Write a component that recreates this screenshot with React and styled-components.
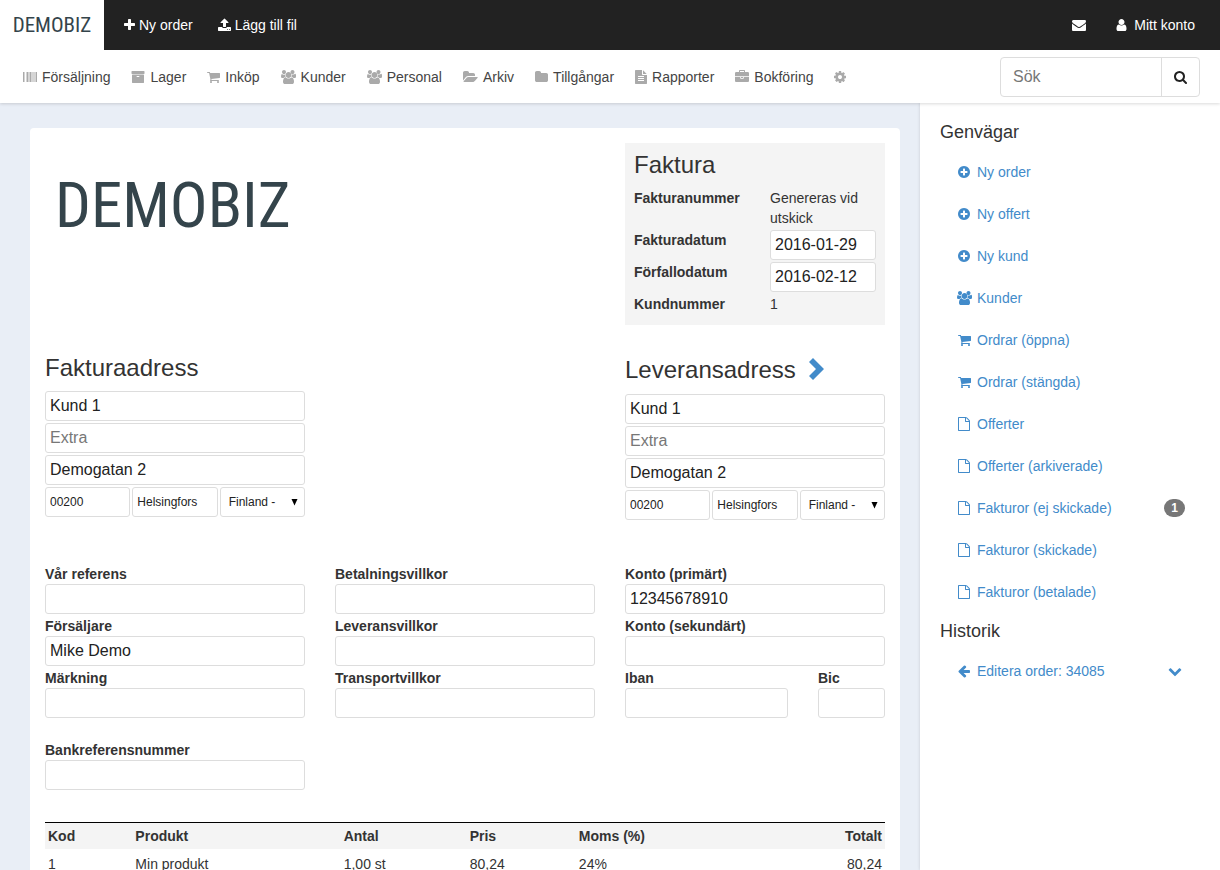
import React from 'react';
import styled, { createGlobalStyle } from 'styled-components';

const GlobalStyle = createGlobalStyle`
  * {
    box-sizing: border-box;
  }

  body {
    margin: 0;
    color: #333;
    background: #e9eef6;
    font-family: "Liberation Sans", Arial, sans-serif;
    font-size: 14px;
    line-height: 20px;
  }

  input, select, button {
    font-family: inherit;
  }

  a {
    color: inherit;
    text-decoration: none;
  }
`;

const Page = styled.div`
  display: flex;
  flex-direction: column;
  height: 100vh;
`;

const TopBar = styled.header`
  display: flex;
  align-items: center;
  flex: none;
  position: relative;
  z-index: 3;
  height: 50px;
  padding-right: 25px;
  background: #222;
  color: #fff;
`;

const Brand = styled.a`
  display: flex;
  align-items: center;
  justify-content: center;
  width: 104px;
  height: 50px;
  margin-right: 20px;
  background: #fff;
`;

const Wordmark = styled.span`
  color: #34444b;
  font-family: "Roboto Condensed", "DejaVu Sans Condensed", sans-serif;
  font-size: ${(props) => (props.$large ? 63 : 21)}px;
  line-height: ${(props) => (props.$large ? 56 : 20)}px;
`;

const TopLink = styled.a`
  display: flex;
  align-items: center;
  gap: 4px;
  margin-right: 25px;
`;

const Account = styled.div`
  display: flex;
  align-items: center;
  gap: 26px;
  margin-left: auto;

  ${TopLink} {
    margin-right: 0;
  }
`;

const NavBar = styled.nav`
  display: flex;
  align-items: center;
  justify-content: space-between;
  flex: none;
  position: relative;
  z-index: 2;
  height: 53px;
  padding: 0 20px 0 23px;
  background: #fff;
  box-shadow: 0 1px 3px rgba(0, 0, 0, 0.15);
`;

const NavList = styled.ul`
  display: flex;
  gap: 21px;
  margin: 0;
  padding: 0;
  list-style: none;
`;

const NavLink = styled.a`
  display: flex;
  align-items: center;
  gap: 5px;
  min-height: 20px;
  color: #444;

  svg {
    color: #aaa;
  }
`;

const SearchForm = styled.form`
  display: flex;
  width: 200px;
  height: 40px;
  border: 1px solid #ddd;
  border-radius: 4px;
`;

const SearchInput = styled.input`
  flex: 1;
  min-width: 0;
  padding: 0 12px;
  border: none;
  background: none;
  font-size: 16px;

  &::placeholder {
    color: #777;
  }
`;

const SearchButton = styled.button`
  display: flex;
  align-items: center;
  justify-content: center;
  width: 38px;
  padding: 0;
  border: none;
  border-left: 1px solid #ddd;
  background: none;
  color: #222;
  cursor: pointer;
`;

const Body = styled.div`
  display: flex;
  flex: 1;
  min-height: 0;
`;

const Content = styled.main`
  flex: 1;
  min-width: 0;
  padding: 25px 20px 25px 30px;
  overflow-y: auto;
  scrollbar-width: none;
`;

const Invoice = styled.div`
  padding: 15px;
  border-radius: 4px;
  background: #fff;
`;

const Columns = styled.div`
  display: grid;
  grid-template-columns: repeat(3, 1fr);
  column-gap: 30px;
  align-items: start;
  margin-top: ${(props) => props.$space || 0}px;
`;

const LogoCell = styled.div`
  display: flex;
  grid-column: span 2;
  padding: 35px 10px;
`;

const Summary = styled.section`
  padding: 9px 9px 11px;
  background: #f4f4f4;
`;

const Heading = styled.h3`
  display: flex;
  align-items: center;
  gap: 12px;
  margin: 0 0 10px;
  min-height: ${(props) => (props.$tall ? 29 : 26)}px;
  font-size: 24px;
  font-weight: normal;
  line-height: 26px;
`;

const SummaryGrid = styled.div`
  display: grid;
  grid-template-columns: 1fr 106px;
  row-gap: 2px;
`;

const Label = styled.label`
  display: block;
  font-weight: bold;
`;

const Term = styled.div`
  font-weight: bold;
`;

const Input = styled.input`
  display: block;
  width: 100%;
  min-width: 0;
  height: 30px;
  padding: 0 4px;
  border: 1px solid #ddd;
  border-radius: 3px;
  background: #fff;
  color: #222;
  font-size: ${(props) => (props.$small ? 12 : 16)}px;

  &::placeholder {
    color: #777;
  }
`;

const Address = styled.section`
  grid-column: ${(props) => props.$column};
`;

const AddressFields = styled.div`
  display: grid;
  gap: 2px;
`;

const PostalRow = styled.div`
  display: grid;
  grid-template-columns: repeat(3, 1fr);
  gap: 2px;
`;

const SelectBox = styled.div`
  position: relative;

  svg {
    position: absolute;
    top: 12px;
    right: 7px;
    pointer-events: none;
  }
`;

const Select = styled.select`
  width: 100%;
  height: 30px;
  padding: 0 8px;
  border: 1px solid #ddd;
  border-radius: 3px;
  appearance: none;
  background: #fff;
  color: #222;
  font-size: 12px;
`;

const CopyButton = styled.button`
  display: flex;
  padding: 0;
  border: none;
  background: none;
  color: #428bca;
  cursor: pointer;
`;

const FieldStack = styled.div`
  display: grid;
  gap: 2px;
`;

const BankRow = styled.div`
  display: grid;
  grid-template-columns: 17fr 7fr;
  gap: 30px;
`;

const OrderTable = styled.table`
  width: 100%;
  margin-top: 32px;
  border-collapse: collapse;
  table-layout: fixed;
  border-top: 1px solid #000;

  th {
    padding: 3px;
    background: #f4f4f4;
    text-align: left;
  }

  td {
    padding: 5px 3px;
  }

  th:last-child,
  td:last-child {
    text-align: right;
  }
`;

const Th = styled.th`
  width: ${(props) => props.$width || 'auto'};
`;

const Sidebar = styled.aside`
  flex: none;
  width: 300px;
  padding: 11px 20px;
  background: #fff;
  box-shadow: 0 0 3px rgba(0, 0, 0, 0.15);
  overflow-y: auto;
  scrollbar-width: none;
`;

const SideHeading = styled.h4`
  margin: 8px 0 9px;
  font-size: 18px;
  font-weight: normal;
  line-height: 20px;
`;

const SideList = styled.ul`
  margin: 0;
  padding: 0;
  list-style: none;
`;

const SideItem = styled.li`
  display: flex;
  align-items: center;
  justify-content: space-between;
  height: 42px;
  padding: 0 15px;
  color: #428bca;
`;

const SideLink = styled.a`
  display: flex;
  align-items: center;
  gap: 4px;
`;

const IconSlot = styled.span`
  display: flex;
  justify-content: center;
  width: 18px;
`;

const Badge = styled.span`
  padding: 3px 7px;
  border-radius: 10px;
  background: #777;
  color: #fff;
  font-size: 12px;
  font-weight: bold;
  line-height: 12px;
`;

const ExpandButton = styled.button`
  display: flex;
  padding: 0 3px;
  border: none;
  background: none;
  color: #428bca;
  cursor: pointer;
`;

// w is the advance width in pixels at a 14px icon size, x the left edge of the glyph box
const icons = {
  plus: { w: 11, x: 192, d: 'M1600 736v192q0 40-28 68t-68 28h-416v416q0 40-28 68t-68 28h-192q-40 0-68-28t-28-68v-416h-416q-40 0-68-28t-28-68v-192q0-40 28-68t68-28h416v-416q0-40 28-68t68-28h192q40 0 68 28t28 68v416h416q40 0 68 28t28 68z' },
  upload: { w: 13, x: 64, d: 'M1344 1472q0-26-19-45t-45-19-45 19-19 45 19 45 45 19 45-19 19-45zm256 0q0-26-19-45t-45-19-45 19-19 45 19 45 45 19 45-19 19-45zm128-224v320q0 40-28 68t-68 28h-1472q-40 0-68-28t-28-68v-320q0-40 28-68t68-28h427q21 56 70.5 92t110.5 36h256q61 0 110.5-36t70.5-92h427q40 0 68 28t28 68zm-325-648q-17 40-59 40h-256v448q0 26-19 45t-45 19h-256q-26 0-45-19t-19-45v-448h-256q-42 0-59-40-17-39 14-69l448-448q18-19 45-19t45 19l448 448q31 30 14 69z' },
  search: { w: 13, x: 64, d: 'M1216 832q0-185-131.5-316.5t-316.5-131.5-316.5 131.5-131.5 316.5 131.5 316.5 316.5 131.5 316.5-131.5 131.5-316.5zm512 832q0 52-38 90t-90 38q-54 0-90-38l-343-342q-179 124-399 124-143 0-273.5-55.5t-225-150-150-225-55.5-273.5 55.5-273.5 150-225 225-150 273.5-55.5 273.5 55.5 225 150 150 225 55.5 273.5q0 220-124 399l343 343q37 37 37 90z' },
  envelope: { w: 14, x: 0, d: 'M1792 710v794q0 66-47 113t-113 47h-1472q-66 0-113-47t-47-113v-794q44 49 101 87 362 246 497 345 57 42 92.5 65.5t94.5 48 110 24.5h2q51 0 110-24.5t94.5-48 92.5-65.5q170-123 498-345 57-39 100-87zm0-294q0 79-49 151t-122 123q-376 261-468 325-10 7-42.5 31t-54 38.5-52 32.5-57.5 27-50 9h-2q-23 0-50-9t-57.5-27-52-32.5-54-38.5-42.5-31q-91-64-262-182.5t-205-142.5q-62-42-117-115.5t-55-136.5q0-78 41.5-130t118.5-52h1472q65 0 112.5 47t47.5 113z' },
  user: { w: 11, x: 192, d: 'M1536 1399q0 109-62.5 187t-150.5 78h-854q-88 0-150.5-78t-62.5-187q0-85 8.5-160.5t31.5-152 58.5-131 94-89 134.5-34.5q131 128 313 128t313-128q76 0 134.5 34.5t94 89 58.5 131 31.5 152 8.5 160.5zm-256-887q0 159-112.5 271.5t-271.5 112.5-271.5-112.5-112.5-271.5 112.5-271.5 271.5-112.5 271.5 112.5 112.5 271.5z' },
  barcode: { w: 14, x: 0, d: 'M0 256h128v1280h-128zM192 256h64v1280h-64zM384 256h64v1280h-64zM512 256h192v1280h-192zM768 256h64v1280h-64zM896 256h128v1280h-128zM1088 256h64v1280h-64zM1216 256h128v1280h-128zM1408 256h64v1280h-64zM1536 256h64v1280h-64zM1664 256h128v1280h-128z' },
  archive: { w: 14, x: 0, d: 'M1088 832q0-26-19-45t-45-19h-256q-26 0-45 19t-19 45 19 45 45 19h256q26 0 45-19t19-45zm576-192v960q0 26-19 45t-45 19h-1408q-26 0-45-19t-19-45v-960q0-26 19-45t45-19h1408q26 0 45 19t19 45zm64-448v256q0 26-19 45t-45 19h-1536q-26 0-45-19t-19-45v-256q0-26 19-45t45-19h1536q26 0 45 19t19 45z' },
  cart: { w: 13, x: 64, d: 'M704 1536q0 52-38 90t-90 38-90-38-38-90 38-90 90-38 90 38 38 90zm896 0q0 52-38 90t-90 38-90-38-38-90 38-90 90-38 90 38 38 90zm128-1088v512q0 24-16.5 42.5t-40.5 21.5l-1044 122q13 60 13 70 0 16-24 64h920q26 0 45 19t19 45-19 45-45 19h-1024q-26 0-45-19t-19-45q0-11 8-31.5t16-36 21.5-40 15.5-29.5l-177-823h-204q-26 0-45-19t-19-45 19-45 45-19h256q16 0 28.5 6.5t19.5 15.5 13 24.5 8 26 5.5 29.5 4.5 26h1201q26 0 45 19t19 45z' },
  users: { w: 15, x: -64, d: 'M529 896q-162 5-265 128h-134q-82 0-138-40.5t-56-118.5q0-353 124-353 6 0 43.5 21t97.5 42.5 119 21.5q67 0 133-23-5 37-5 66 0 159 93 293zm1071 637q0 120-73 189.5t-194 69.5h-874q-121 0-194-69.5t-73-189.5q0-53 3.5-103.5t14-109 26.5-108.5 43-97.5 62-81 85.5-53.5 111.5-20q10 0 43 21.5t73 48 107 48 135 21.5 135-21.5 107-48 73-48 43-21.5q61 0 111.5 20t85.5 53.5 62 81 43 97.5 26.5 108.5 14 109 3.5 103.5zm-1024-1277q0 106-75 181t-181 75-181-75-75-181 75-181 181-75 181 75 75 181zm704 384q0 159-112.5 271.5t-271.5 112.5-271.5-112.5-112.5-271.5 112.5-271.5 271.5-112.5 271.5 112.5 112.5 271.5zm576 225q0 78-56 118.5t-138 40.5h-134q-103-123-265-128 93-134 93-293 0-29-5-66 66 23 133 23 59 0 119-21.5t97.5-42.5 43.5-21q124 0 124 353zm-192-609q0 106-75 181t-181 75-181-75-75-181 75-181 181-75 181 75 75 181z' },
  folderOpen: { w: 15, x: 0, d: 'M1879 952q0 31-31 66l-336 396q-43 51-120.5 86.5t-143.5 35.5h-1088q-34 0-60.5-13t-26.5-43q0-31 31-66l336-396q43-51 120.5-86.5t143.5-35.5h1088q34 0 60.5 13t26.5 43zm-343-344v160h-832q-94 0-197 47.5t-164 119.5l-337 396-5 6q0-4-.5-12.5t-.5-12.5v-960q0-92 66-158t158-66h320q92 0 158 66t66 158v32h544q92 0 158 66t66 158z' },
  folder: { w: 13, x: 64, d: 'M1728 608v704q0 92-66 158t-158 66h-1216q-92 0-158-66t-66-158v-960q0-92 66-158t158-66h320q92 0 158 66t66 158v32h672q92 0 158 66t66 158z' },
  fileText: { w: 12, x: 128, d: 'M1596 476q14 14 28 36h-472v-472q22 14 36 28zm-476 164h544v1056q0 40-28 68t-68 28h-1344q-40 0-68-28t-28-68v-1600q0-40 28-68t68-28h800v544q0 40 28 68t68 28zm160 736v-64q0-14-9-23t-23-9h-704q-14 0-23 9t-9 23v64q0 14 9 23t23 9h704q14 0 23-9t9-23zm0-256v-64q0-14-9-23t-23-9h-704q-14 0-23 9t-9 23v64q0 14 9 23t23 9h704q14 0 23-9t9-23zm0-256v-64q0-14-9-23t-23-9h-704q-14 0-23 9t-9 23v64q0 14 9 23t23 9h704q14 0 23-9t9-23z' },
  file: { w: 12, x: 128, d: 'M1596 380q28 28 48 76t20 88v1152q0 40-28 68t-68 28h-1344q-40 0-68-28t-28-68v-1600q0-40 28-68t68-28h896q40 0 88 20t76 48zm-444-244v376h376q-10-29-22-41l-313-313q-12-12-41-22zm384 1528v-1024h-416q-40 0-68-28t-28-68v-416h-768v1536h1280z' },
  briefcase: { w: 14, x: 0, d: 'M640 256h512v-128h-512v128zm1152 640v480q0 66-47 113t-113 47h-1472q-66 0-113-47t-47-113v-480h672v160q0 26 19 45t45 19h320q26 0 45-19t19-45v-160h672zm-768 0v128h-256v-128h256zm768-480v384h-1792v-384q0-66 47-113t113-47h352v-160q0-40 28-68t68-28h576q40 0 68 28t28 68v160h352q66 0 113 47t47 113z' },
  cog: { w: 12, x: 128, d: 'M1152 896q0-106-75-181t-181-75-181 75-75 181 75 181 181 75 181-75 75-181zm512-109v222q0 12-8 23t-20 13l-185 28q-19 54-39 91 35 50 107 138 10 12 10 25t-9 23q-27 37-99 108t-94 71q-12 0-26-9l-138-108q-44 23-91 38-16 136-29 186-7 28-36 28h-222q-14 0-24.5-8.5t-11.5-21.5l-28-184q-49-16-90-37l-141 107q-10 9-25 9-14 0-25-11-126-114-165-168-7-10-7-23 0-12 8-23 15-21 51-66.5t54-70.5q-27-50-41-99l-183-27q-13-2-21-12.5t-8-23.5v-222q0-12 8-23t19-13l186-28q14-46 39-92-40-57-107-138-10-12-10-24 0-10 9-23 26-36 98.5-107.5t94.5-71.5q13 0 26 10l138 107q44-23 91-38 16-136 29-186 7-28 36-28h222q14 0 24.5 8.5t11.5 21.5l28 184q49 16 90 37l142-107q9-9 24-9 13 0 25 10 129 119 165 170 7 8 7 22 0 12-8 23-15 21-51 66.5t-54 70.5q26 50 41 98l183 28q13 2 21 12.5t8 23.5z' },
  plusCircle: { w: 12, x: 128, d: 'M1344 960v-128q0-26-19-45t-45-19h-256v-256q0-26-19-45t-45-19h-128q-26 0-45 19t-19 45v256h-256q-26 0-45 19t-19 45v128q0 26 19 45t45 19h256v256q0 26 19 45t45 19h128q26 0 45-19t19-45v-256h256q26 0 45-19t19-45zm320-64q0 209-103 385.5t-279.5 279.5-385.5 103-385.5-103-279.5-279.5-103-385.5 103-385.5 279.5-279.5 385.5-103 385.5 103 279.5 279.5 103 385.5z' },
  arrowLeft: { w: 12, x: 128, d: 'M1664 896v128q0 53-32.5 90.5t-84.5 37.5h-704l293 294q38 36 38 90t-38 90l-75 76q-37 37-90 37-52 0-91-37l-651-652q-37-37-37-90 0-52 37-91l651-650q38-38 91-38 52 0 90 38l75 74q38 38 38 91t-38 91l-293 293h704q52 0 84.5 37.5t32.5 90.5z' },
  chevronDown: { w: 14, x: 0, d: 'M1683 808l-742 741q-19 19-45 19t-45-19l-742-741q-19-19-19-45.5t19-45.5l166-165q19-19 45-19t45 19l531 531 531-531q19-19 45-19t45 19l166 165q19 19 19 45.5t-19 45.5z' },
};

function Icon({ name }) {
  const { w, x, d } = icons[name];
  return (
    <svg width={w} height={14} viewBox={`${x} 0 ${w * 128} 1792`} fill="currentColor" aria-hidden="true">
      <path d={d} />
    </svg>
  );
}

const navItems = [
  ['barcode', 'Försäljning'],
  ['archive', 'Lager'],
  ['cart', 'Inköp'],
  ['users', 'Kunder'],
  ['users', 'Personal'],
  ['folderOpen', 'Arkiv'],
  ['folder', 'Tillgångar'],
  ['fileText', 'Rapporter'],
  ['briefcase', 'Bokföring'],
];

const shortcuts = [
  { icon: 'plusCircle', text: 'Ny order' },
  { icon: 'plusCircle', text: 'Ny offert' },
  { icon: 'plusCircle', text: 'Ny kund' },
  { icon: 'users', text: 'Kunder' },
  { icon: 'cart', text: 'Ordrar (öppna)' },
  { icon: 'cart', text: 'Ordrar (stängda)' },
  { icon: 'file', text: 'Offerter' },
  { icon: 'file', text: 'Offerter (arkiverade)' },
  { icon: 'file', text: 'Fakturor (ej skickade)', count: 1 },
  { icon: 'file', text: 'Fakturor (skickade)' },
  { icon: 'file', text: 'Fakturor (betalade)' },
];

function Field({ id, label, value = '' }) {
  return (
    <div>
      <Label htmlFor={id}>{label}</Label>
      <Input id={id} type="text" defaultValue={value} />
    </div>
  );
}

function AddressForm({ prefix }) {
  return (
    <AddressFields>
      <Input name={`${prefix}-name`} aria-label="Namn" defaultValue="Kund 1" />
      <Input name={`${prefix}-extra`} aria-label="Extra" placeholder="Extra" />
      <Input name={`${prefix}-street`} aria-label="Gatuadress" defaultValue="Demogatan 2" />
      <PostalRow>
        <Input $small name={`${prefix}-zip`} aria-label="Postnummer" defaultValue="00200" />
        <Input $small name={`${prefix}-city`} aria-label="Ort" defaultValue="Helsingfors" />
        <SelectBox>
          <Select name={`${prefix}-country`} aria-label="Land">
            <option>Finland -</option>
          </Select>
          <svg width="7" height="7" viewBox="0 0 7 7" aria-hidden="true">
            <path d="M.5 0h6L3.500 6.500z" />
          </svg>
        </SelectBox>
      </PostalRow>
    </AddressFields>
  );
}

function App() {
  return (
    <Page>
      <GlobalStyle />
      <TopBar>
        <Brand href="#">
          <Wordmark>DEMOBIZ</Wordmark>
        </Brand>
        <TopLink href="#"><Icon name="plus" />Ny order</TopLink>
        <TopLink href="#"><Icon name="upload" />Lägg till fil</TopLink>
        <Account>
          <TopLink href="#" aria-label="Meddelanden"><Icon name="envelope" /></TopLink>
          <TopLink href="#"><IconSlot><Icon name="user" /></IconSlot>Mitt konto</TopLink>
        </Account>
      </TopBar>

      <NavBar>
        <NavList>
          {navItems.map(([icon, text]) => (
            <li key={text}>
              <NavLink href="#"><Icon name={icon} />{text}</NavLink>
            </li>
          ))}
          <li>
            <NavLink href="#" aria-label="Inställningar"><Icon name="cog" /></NavLink>
          </li>
        </NavList>
        <SearchForm onSubmit={(e) => e.preventDefault()}>
          <SearchInput type="text" placeholder="Sök" aria-label="Sök" />
          <SearchButton type="submit" aria-label="Sök"><Icon name="search" /></SearchButton>
        </SearchForm>
      </NavBar>

      <Body>
        <Content>
          <Invoice>
            <Columns>
              <LogoCell>
                <Wordmark $large>DEMOBIZ</Wordmark>
              </LogoCell>
              <Summary>
                <Heading>Faktura</Heading>
                <SummaryGrid>
                  <Term>Fakturanummer</Term>
                  <div>Genereras vid utskick</div>
                  <Label htmlFor="invoice-date">Fakturadatum</Label>
                  <Input id="invoice-date" type="text" defaultValue="2016-01-29" />
                  <Label htmlFor="due-date">Förfallodatum</Label>
                  <Input id="due-date" type="text" defaultValue="2016-02-12" />
                  <Term>Kundnummer</Term>
                  <div>1</div>
                </SummaryGrid>
              </Summary>
            </Columns>

            <Columns $space={30}>
              <Address $column={1}>
                <Heading>Fakturaadress</Heading>
                <AddressForm prefix="billing" />
              </Address>
              <Address $column={3}>
                <Heading $tall>
                  Leveransadress
                  <CopyButton type="button" aria-label="Kopiera adress">
                    <svg width="17" height="24" viewBox="0 0 17 24" fill="currentColor" aria-hidden="true">
                      <path d="M1 4L5 0 16 11 5 22 1 18 8 11z" />
                    </svg>
                  </CopyButton>
                </Heading>
                <AddressForm prefix="delivery" />
              </Address>
            </Columns>

            <Columns $space={44}>
              <FieldStack>
                <Field id="reference" label="Vår referens" />
                <Field id="seller" label="Försäljare" value="Mike Demo" />
                <Field id="marking" label="Märkning" />
              </FieldStack>
              <FieldStack>
                <Field id="payment-terms" label="Betalningsvillkor" />
                <Field id="delivery-terms" label="Leveransvillkor" />
                <Field id="transport-terms" label="Transportvillkor" />
              </FieldStack>
              <FieldStack>
                <Field id="account-primary" label="Konto (primärt)" value="12345678910" />
                <Field id="account-secondary" label="Konto (sekundärt)" />
                <BankRow>
                  <Field id="iban" label="Iban" />
                  <Field id="bic" label="Bic" />
                </BankRow>
              </FieldStack>
            </Columns>

            <Columns $space={22}>
              <Field id="bank-reference" label="Bankreferensnummer" />
            </Columns>

            <OrderTable>
              <thead>
                <tr>
                  <Th $width="10.4%">Kod</Th>
                  <Th $width="24.8%">Produkt</Th>
                  <Th $width="15%">Antal</Th>
                  <Th $width="13%">Pris</Th>
                  <Th>Moms (%)</Th>
                  <Th>Totalt</Th>
                </tr>
              </thead>
              <tbody>
                <tr>
                  <td>1</td>
                  <td>Min produkt</td>
                  <td>1,00 st</td>
                  <td>80,24</td>
                  <td>24%</td>
                  <td>80,24</td>
                </tr>
              </tbody>
            </OrderTable>
          </Invoice>
        </Content>

        <Sidebar>
          <SideHeading>Genvägar</SideHeading>
          <SideList>
            {shortcuts.map((item) => (
              <SideItem key={item.text}>
                <SideLink href="#">
                  <IconSlot><Icon name={item.icon} /></IconSlot>
                  {item.text}
                </SideLink>
                {item.count && <Badge>{item.count}</Badge>}
              </SideItem>
            ))}
          </SideList>
          <SideHeading>Historik</SideHeading>
          <SideList>
            <SideItem>
              <SideLink href="#">
                <IconSlot><Icon name="arrowLeft" /></IconSlot>
                Editera order: 34085
              </SideLink>
              <ExpandButton type="button" aria-label="Visa mer"><Icon name="chevronDown" /></ExpandButton>
            </SideItem>
          </SideList>
        </Sidebar>
      </Body>
    </Page>
  );
}

export default App;
